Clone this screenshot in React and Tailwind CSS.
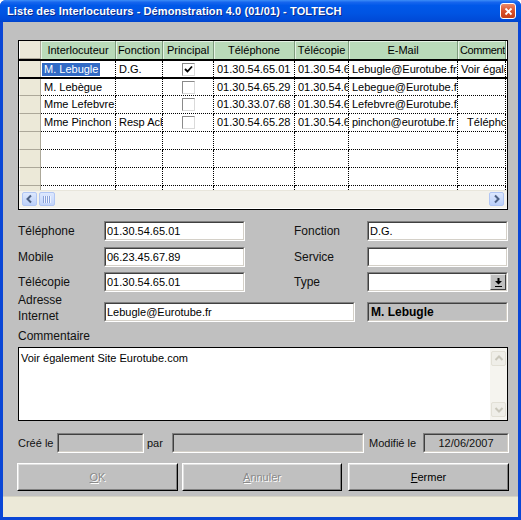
import React from 'react';

const COLS = [
  { label: 'Interlocuteur', w: 'w-[75px]' },
  { label: 'Fonction', w: 'w-[47px]' },
  { label: 'Principal', w: 'w-[51px]' },
  { label: 'Téléphone', w: 'w-[81px]' },
  { label: 'Télécopie', w: 'w-[54px]' },
  { label: 'E-Mail', w: 'w-[109px]' },
  { label: 'Comment', w: 'w-[48px]', left: true },
];

const ROWS = [
  ['M. Lebugle', 'D.G.', true, '01.30.54.65.01', '01.30.54.65.01', 'Lebugle@Eurotube.fr', 'Voir également Site Eurotube.com'],
  ['M. Lebègue', '', false, '01.30.54.65.29', '01.30.54.65.01', 'Lebegue@Eurotube.fr', ''],
  ['Mme Lefebvre', '', false, '01.30.33.07.68', '01.30.54.65.01', 'Lefebvre@Eurotube.fr', ''],
  ['Mme Pinchon', 'Resp Achats', false, '01.30.54.65.28', '01.30.54.65.01', 'pinchon@eurotube.fr', '\u00a0\u00a0Téléphoner'],
  null,
  null,
  null,
  null,
];

function Sunken({ className = '', bg = 'bg-white', children }) {
  return (
    <div className={`shrink-0 border border-t-[#808080] border-l-[#808080] border-r-white border-b-white ${className}`}>
      <div className={`flex h-full items-center overflow-hidden border border-t-[#404040] border-l-[#404040] border-r-[#d4d0c8] border-b-[#d4d0c8] ${bg}`}>
        {children}
      </div>
    </div>
  );
}

function Check({ checked }) {
  return (
    <div className="flex h-[13px] w-[13px] items-center justify-center border border-t-[#8a8a8a] border-l-[#8a8a8a] border-r-[#dadada] border-b-[#dadada] bg-white">
      {checked && (
        <svg width="9" height="9" viewBox="0 0 9 9">
          <polyline points="1,4 3.5,6.5 8,1.5" stroke="#000" strokeWidth="1.8" fill="none" />
        </svg>
      )}
    </div>
  );
}

function Chevron({ dir, color }) {
  const pts = {
    left: '6,1.5 2.5,5 6,8.5',
    right: '3,1.5 6.5,5 3,8.5',
    up: '1.5,6 5,2.5 8.5,6',
    down: '1.5,3 5,6.5 8.5,3',
  }[dir];
  return (
    <svg width="10" height="10" viewBox="0 0 10 10">
      <polyline points={pts} stroke={color} strokeWidth="2" fill="none" />
    </svg>
  );
}

function XpButton({ dir }) {
  return (
    <div className="flex h-[14px] w-[15px] shrink-0 items-center justify-center rounded-[2px] border border-[#b1c6f4] bg-[linear-gradient(to_bottom,#dde8fe,#bcd0f9)]">
      <Chevron dir={dir} color="#4d6185" />
    </div>
  );
}

function HScroll() {
  return (
    <div className="flex h-[18px] items-center bg-[#f3f2ec] px-[3px] shadow-[inset_0_1px_0_#e8e6dc]">
      <XpButton dir="left" />
      <div className="ml-[2px] flex h-[14px] w-[16px] items-center justify-center rounded-[2px] border border-[#b1c6f4] bg-[linear-gradient(to_bottom,#dde8fe,#c3d5fb)]">
        <svg width="8" height="7" viewBox="0 0 8 7">
          <path d="M0.5 0v7M2.5 0v7M4.5 0v7M6.5 0v7" stroke="#8aa2d9" strokeWidth="1" />
          <path d="M1.5 0v7M3.5 0v7M5.5 0v7M7.5 0v7" stroke="#eef3ff" strokeWidth="1" />
        </svg>
      </div>
      <div className="flex-1" />
      <XpButton dir="right" />
    </div>
  );
}

function DisabledScrollBtn({ dir }) {
  return (
    <div className="flex h-[15px] w-[15px] items-center justify-center rounded-[2px] border border-[#e2e0d6] bg-[#efeee8]">
      <Chevron dir={dir} color="#c9c7bb" />
    </div>
  );
}

function Grid() {
  return (
    <div className="flex h-[170px] w-[490px] flex-col border border-black bg-white text-[11px]">
      <div className="flex h-[18px] shrink-0">
        <div className="w-[22px] shrink-0 border-r border-b border-l border-r-[#aca899] border-b-[#aca899] border-l-white bg-[#ece9d8]" />
        {COLS.map((c) => (
          <div
            key={c.label}
            className={`${c.w} flex shrink-0 items-center overflow-hidden whitespace-nowrap border-r border-r-[#7e9c7e] bg-[#b9dab9] shadow-[inset_1px_1px_0_#e4f2e4] ${c.left ? 'pl-[2px] tracking-[-0.4px]' : 'justify-center'}`}
          >
            {c.label}
          </div>
        ))}
      </div>
      <div className="flex h-[131px] shrink-0 flex-col overflow-hidden">
        {ROWS.map((row, i) => {
          const first = i === 0;
          const h = first ? 'h-[20px] border-y-2 border-black' : i === 1 ? 'h-[17px]' : 'h-[18px]';
          return (
            <div key={i} className={`flex shrink-0 ${h}`}>
              <div className={`w-[22px] shrink-0 border-r border-l border-r-[#aca899] border-l-white bg-[#ece9d8] ${first ? '' : 'border-b border-b-[#aca899]'}`} />
              {COLS.map((c, j) => {
                const v = row ? row[j] : '';
                let content = v;
                if (j === 2) content = row ? <Check checked={v} /> : null;
                if (first && j === 0) {
                  content = <span className="bg-[#316ac5] px-[2px] leading-[13px] text-white">{v}</span>;
                }
                return (
                  <div
                    key={j}
                    className={`${c.w} flex shrink-0 items-center overflow-hidden whitespace-nowrap border-r border-dotted border-r-black ${first ? '' : 'border-b border-b-black'} ${j === 2 ? 'justify-center pl-[1px]' : first && j === 0 ? 'pl-[1px]' : 'pl-[3px]'}`}
                  >
                    {content}
                  </div>
                );
              })}
            </div>
          );
        })}
      </div>
      <HScroll />
    </div>
  );
}

function Btn({ w, disabled, first, rest }) {
  return (
    <div className={`flex h-[28px] shrink-0 border border-t-white border-l-white border-r-black border-b-black ${w}`}>
      <div
        className={`flex flex-1 items-center justify-center border border-t-[#dfdfdf] border-l-[#dfdfdf] border-r-[#808080] border-b-[#808080] bg-[#c0c0c0] text-[11px] ${disabled ? 'text-[#8a8a8a] [text-shadow:1px_1px_0_#ffffff]' : 'text-black'}`}
      >
        <span>
          <u>{first}</u>
          {rest}
        </span>
      </div>
    </div>
  );
}

export default function App() {
  const label = 'text-[12px] text-[#111]';
  return (
    <div className="h-[520px] w-[521px] bg-white">
      <div className="flex h-full w-full flex-col rounded-t-[6px] bg-[#0a46d6] font-['Liberation_Sans',Arial,sans-serif] text-black">
        {/* title bar */}
        <div className="flex h-[22px] shrink-0 items-center justify-between rounded-t-[6px] bg-[linear-gradient(to_bottom,#3d8ef7_0%,#1766ee_10%,#0058e9_25%,#0054e3_60%,#004bd8_90%,#0043cc_100%)] pl-[7px] pr-[5px]">
          <span className="text-[11px] font-bold tracking-[0.1px] text-white [text-shadow:1px_1px_0_#0b2a8a]">
            Liste des Interlocuteurs - Démonstration 4.0 (01/01) - TOLTECH
          </span>
          <div className="flex h-[16px] w-[16px] items-center justify-center rounded-[3px] border border-white bg-[linear-gradient(to_bottom,#ec8a68,#d9512c_50%,#c43e18)]">
            <svg width="9" height="9" viewBox="0 0 9 9">
              <path d="M1.5 1.5l6 6M7.5 1.5l-6 6" stroke="#fff" strokeWidth="1.8" />
            </svg>
          </div>
        </div>

        {/* body */}
        <div className="mx-[3px] mb-[3px] flex flex-1 flex-col bg-[#c0c0c0]">
          <div className="flex flex-col pl-[15px] pt-[18px]">
            <Grid />

            <div className="mt-[11px] flex h-[20px] items-center">
              <span className={`w-[86px] ${label}`}>Téléphone</span>
              <Sunken className="h-[20px] w-[141px]">
                <span className="pl-[1px] text-[11px]">01.30.54.65.01</span>
              </Sunken>
              <span className={`ml-[49px] w-[73px] ${label}`}>Fonction</span>
              <Sunken className="h-[20px] w-[141px]">
                <span className="pl-[1px] text-[11px]">D.G.</span>
              </Sunken>
            </div>

            <div className="mt-[6px] flex h-[20px] items-center">
              <span className={`w-[86px] ${label}`}>Mobile</span>
              <Sunken className="h-[20px] w-[141px]">
                <span className="pl-[1px] text-[11px]">06.23.45.67.89</span>
              </Sunken>
              <span className={`ml-[49px] w-[73px] ${label}`}>Service</span>
              <Sunken className="h-[20px] w-[141px]" />
            </div>

            <div className="mt-[5px] flex h-[20px] items-center">
              <span className={`w-[86px] ${label}`}>Télécopie</span>
              <Sunken className="h-[20px] w-[141px]">
                <span className="pl-[1px] text-[11px]">01.30.54.65.01</span>
              </Sunken>
              <span className={`ml-[49px] w-[73px] ${label}`}>Type</span>
              <Sunken className="h-[20px] w-[141px]">
                <div className="flex-1" />
                <div className="flex h-full w-[16px] items-center justify-center border border-t-[#e8e8e8] border-l-[#e8e8e8] border-r-[#404040] border-b-[#404040] bg-[#c0c0c0]">
                  <svg width="7" height="9" viewBox="0 0 7 9">
                    <path d="M2.5 0h2v3h2.5l-3.5 3.5l-3.5-3.5h2.5z" fill="#000" />
                    <rect x="0" y="8" width="7" height="1" fill="#000" />
                  </svg>
                </div>
              </Sunken>
            </div>

            <div className="flex h-[31px]">
              <div className={`flex w-[86px] flex-col leading-[16px] ${label}`}>
                <span>Adresse</span>
                <span>Internet</span>
              </div>
              <Sunken className="mb-[1px] h-[20px] w-[251px] self-end">
                <span className="pl-[1px] text-[11px]">Lebugle@Eurotube.fr</span>
              </Sunken>
              <Sunken className="mb-[1px] ml-[12px] h-[20px] w-[141px] self-end" bg="bg-[#c0c0c0]">
                <span className="pl-[2px] text-[12px] font-bold">M. Lebugle</span>
              </Sunken>
            </div>

            <div className={`flex h-[24px] items-center pt-[2px] ${label}`}>Commentaire</div>

            <div className="flex h-[74px] w-[490px] border border-black bg-white">
              <div className="flex-1 pl-[2px] pt-[3px] text-[11px] leading-[14px]">Voir également Site Eurotube.com</div>
              <div className="flex w-[17px] flex-col justify-between bg-[#f5f4ef] px-[1px] py-[3px]">
                <DisabledScrollBtn dir="up" />
                <DisabledScrollBtn dir="down" />
              </div>
            </div>

            <div className="mt-[12px] flex h-[20px] items-center text-[11px] text-[#111]">
              <span className="w-[39px]">Créé le</span>
              <Sunken className="h-[20px] w-[87px]" bg="bg-[#c0c0c0]" />
              <span className="w-[28px] pl-[3px]">par</span>
              <Sunken className="h-[20px] w-[192px]" bg="bg-[#c0c0c0]" />
              <span className="w-[59px] pl-[5px]">Modifié le</span>
              <Sunken className="h-[20px] w-[86px]" bg="bg-[#c0c0c0]">
                <span className="w-full text-center">12/06/2007</span>
              </Sunken>
            </div>

            <div className="-ml-[1px] mt-[10px] flex">
              <Btn w="w-[161px]" disabled first="O" rest="K" />
              <div className="w-[4px]" />
              <Btn w="w-[160px]" disabled first="A" rest="nnuler" />
              <div className="w-[6px]" />
              <Btn w="w-[161px]" first="F" rest="ermer" />
            </div>
          </div>

          <div className="mt-auto h-[21px] border-t border-t-[#d6d3c4] bg-[#ece9d8]" />
        </div>
      </div>
    </div>
  );
}
